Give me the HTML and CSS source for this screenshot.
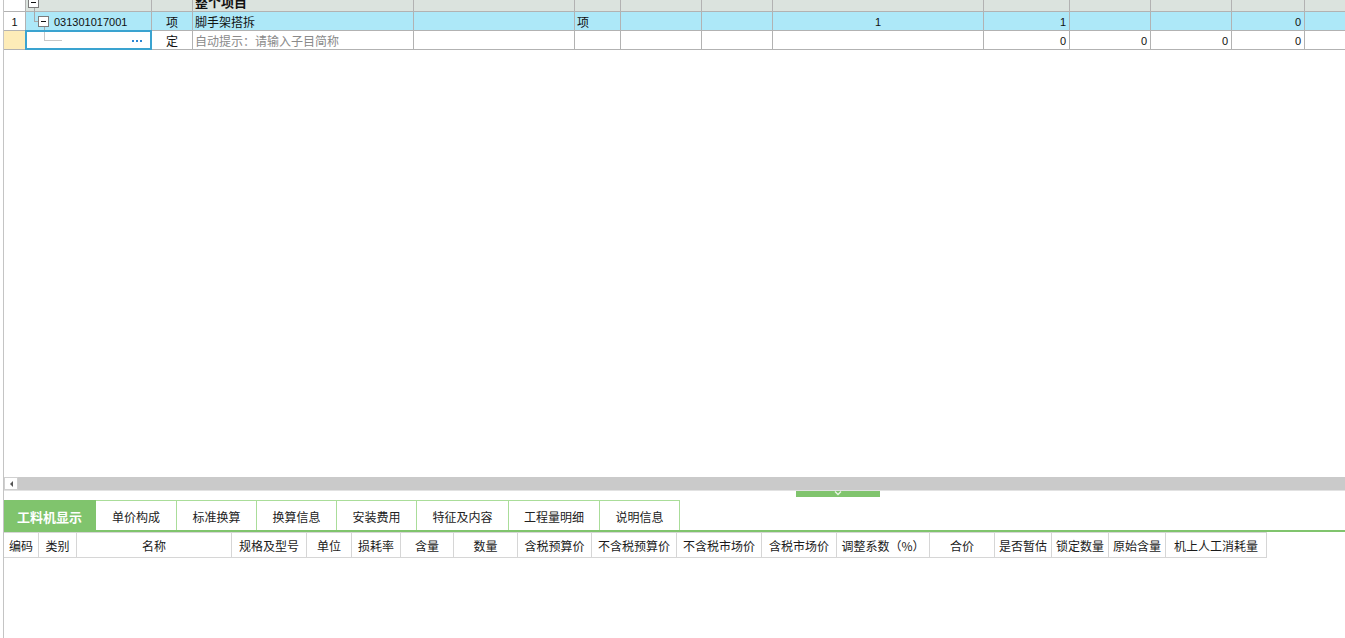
FILE: index.html
```html
<!DOCTYPE html>
<html lang="zh-CN">
<head>
<meta charset="utf-8">
<title>工料机</title>
<link rel="stylesheet" href="styles.css">
</head>
<body>
<div class="app">
  <div class="top">
    <div class="grid">
      <div class="row head">
        <div class="c no white"></div>
        <div class="c tree"><span class="box hbox"></span><span class="ln hv"></span></div>
        <div class="c"></div>
        <div class="c name"><b>整个项目</b></div>
        <div class="c"></div><div class="c"></div><div class="c"></div><div class="c"></div>
        <div class="c"></div><div class="c"></div><div class="c"></div><div class="c"></div>
        <div class="c"></div><div class="c"></div>
      </div>
      <div class="row r1">
        <div class="c no white">1</div>
        <div class="c tree"><span class="ln v1"></span><span class="ln h1"></span><span class="ln v2"></span><span class="box"></span><span class="code">031301017001</span></div>
        <div class="c ctr">项</div>
        <div class="c name">脚手架搭拆</div>
        <div class="c"></div>
        <div class="c left">项</div>
        <div class="c"></div><div class="c"></div>
        <div class="c ctr num">1</div>
        <div class="c rt num">1</div>
        <div class="c"></div><div class="c"></div>
        <div class="c rt num">0</div>
        <div class="c"></div>
      </div>
      <div class="row r2">
        <div class="c no yellow"></div>
        <div class="c tree edit"><span class="ln v3"></span><span class="ln h3"></span><span class="dots"><i></i><i></i><i></i></span></div>
        <div class="c ctr">定</div>
        <div class="c name hint">自动提示：请输入子目简称</div>
        <div class="c"></div><div class="c"></div><div class="c"></div><div class="c"></div>
        <div class="c"></div>
        <div class="c rt num">0</div>
        <div class="c rt num">0</div>
        <div class="c rt num">0</div>
        <div class="c rt num">0</div>
        <div class="c"></div>
      </div>
    </div>
  </div>
  <div class="hscroll">
    <div class="sbtn"><span class="tri"></span></div>
    <div class="sbar"></div>
  </div>
  <div class="splitter">
    <div class="handle"><svg width="8" height="5" viewBox="0 0 8 5"><polyline points="1,0.5 4,3.5 7,0.5" fill="none" stroke="#e8f5e4" stroke-width="1.4"/></svg></div>
  </div>
  <div class="tabs">
    <div class="tab active w92">工料机显示</div>
    <div class="tab w81">单价构成</div>
    <div class="tab w80">标准换算</div>
    <div class="tab w80">换算信息</div>
    <div class="tab w80">安装费用</div>
    <div class="tab w92">特征及内容</div>
    <div class="tab w91">工程量明细</div>
    <div class="tab w80">说明信息</div>
  </div>
  <div class="bhead">
    <div class="h" style="width:35px">编码</div>
    <div class="h" style="width:38px">类别</div>
    <div class="h" style="width:155px">名称</div>
    <div class="h" style="width:75px">规格及型号</div>
    <div class="h" style="width:45px">单位</div>
    <div class="h" style="width:49px">损耗率</div>
    <div class="h" style="width:53px">含量</div>
    <div class="h" style="width:64px">数量</div>
    <div class="h" style="width:74px">含税预算价</div>
    <div class="h" style="width:85px">不含税预算价</div>
    <div class="h" style="width:85px">不含税市场价</div>
    <div class="h" style="width:75px">含税市场价</div>
    <div class="h" style="width:93px">调整系数（%）</div>
    <div class="h" style="width:65px">合价</div>
    <div class="h" style="width:57px">是否暂估</div>
    <div class="h" style="width:57px">锁定数量</div>
    <div class="h" style="width:57px">原始含量</div>
    <div class="h" style="width:101px">机上人工消耗量</div>
  </div>
</div>
</body>
</html>
```
FILE: styles.css
```css
* { box-sizing: border-box; }
html, body { margin: 0; padding: 0; background: #fff; }
body {
  width: 1345px;
  height: 638px;
  overflow: hidden;
  font-family: "Noto Sans CJK SC", "Liberation Sans", sans-serif;
  font-size: 12px;
  color: #111;
}
.app {
  margin-left: 3px;
  border-left: 1px solid #c4c4c4;
  height: 638px;
  display: flex;
  flex-direction: column;
}
.top {
  height: 477px;
  overflow: hidden;
  flex: none;
}
.grid { margin-top: -9px; width: 1401px; }
.row {
  display: grid;
  grid-template-columns: 22px 126px 41px 221px 161px 46px 81px 71px 211px 86px 81px 81px 73px 100px;
  height: 19px;
}
.row.head { height: 21px; background: #dbe3de; }
.row.r1 { background: #ade8f8; }
.row.r2 { background: #fff; }
.c {
  border-right: 1px solid #b2b2b2;
  border-bottom: 1px solid #b2b2b2;
  display: flex;
  align-items: center;
  line-height: 16px;
  padding-top: 2px;
  white-space: nowrap;
  overflow: hidden;
  position: relative;
}
.head .c { padding-top: 0; }
.c.white { background: #fff; justify-content: center; font-family: "Liberation Sans", sans-serif; font-size: 11px; }
.c.yellow { background: #fdecb8; }
.c.ctr { justify-content: center; }
.c.left { padding-left: 2px; }
.c.rt { justify-content: flex-end; padding-right: 3px; }
.c.name { padding-left: 2px; }
.head .c.name b { font-size: 13px; margin-top: 2px; }
.num { font-family: "Liberation Sans", sans-serif; font-size: 11px; }
.hint { color: #8a8a8a; }
.tree { overflow: visible; }
.box {
  position: absolute;
  width: 11px;
  height: 11px;
  border: 1px solid #7c7c7c;
  background: #fff;
}
.box::after {
  content: "";
  position: absolute;
  left: 2px;
  top: 4px;
  width: 5px;
  height: 1px;
  background: #111;
}
.head .hbox { left: 2px; top: 6px; }
.r1 .box { left: 12px; top: 4px; }
.code {
  position: absolute;
  left: 28px;
  top: 2px;
  font-family: "Liberation Sans", sans-serif;
  font-size: 11px;
}
.ln { position: absolute; background: #a8a8a8; }
.hv { left: 8px; top: 17px; width: 1px; height: 4px; }
.v1 { left: 8px; top: 0; width: 1px; height: 9px; }
.h1 { left: 8px; top: 9px; width: 4px; height: 1px; }
.v2 { left: 18px; top: 15px; width: 1px; height: 4px; }
.edit {
  border: 2px solid #3aa3d0;
  margin-left: -1px;
  margin-top: -1px;
  background: #fff;
  overflow: visible;
}
.v3 { left: 17px; top: 0; width: 1px; height: 8px; background: #c8c8c8; }
.h3 { left: 17px; top: 8px; width: 18px; height: 1px; background: #c8c8c8; }
.dots {
  position: absolute;
  right: 8px;
  top: 8px;
  display: flex;
  gap: 2px;
}
.dots i { display: block; width: 2px; height: 2px; background: #2a86d4; }
.hscroll {
  height: 14px;
  display: flex;
  border-bottom: 1px solid #e2e2e2;
  flex: none;
}
.sbtn {
  width: 14px;
  height: 13px;
  background: #fff;
  border: 1px solid #d0d0d0;
  display: flex;
  align-items: center;
  justify-content: center;
}
.tri {
  width: 0; height: 0;
  border-top: 3px solid transparent;
  border-bottom: 3px solid transparent;
  border-right: 3px solid #555;
}
.sbar { flex: 1; height: 13px; background: #cacaca; }
.splitter { height: 9px; flex: none; }
.handle {
  margin-left: 792px;
  width: 84px;
  height: 6px;
  background: #80c46d;
  display: flex;
  justify-content: center;
  align-items: flex-start;
}
.handle svg { display: block; }
.tabs {
  display: flex;
  height: 32px;
  border-bottom: 2px solid #80c46d;
  flex: none;
}
.tab {
  height: 30px;
  border-top: 1px solid #aadd99;
  border-right: 1px solid #aadd99;
  display: flex;
  align-items: center;
  justify-content: center;
  font-size: 12px;
  color: #222;
  padding-top: 2px;
}
.tab.active {
  background: #80c46d;
  border-color: #80c46d;
  color: #fff;
  font-weight: bold;
  font-size: 13px;
}
.w92 { width: 92px; }
.w91 { width: 91px; }
.w81 { width: 81px; }
.w80 { width: 80px; }
.bhead { display: flex; height: 26px; flex: none; }
.h {
  height: 26px;
  border-top: 1px solid #d6d6d6;
  border-bottom: 1px solid #d6d6d6;
  border-right: 1px solid #d6d6d6;
  display: flex;
  align-items: center;
  justify-content: center;
  font-size: 12px;
  color: #1a1a1a;
  white-space: nowrap;
}
```
